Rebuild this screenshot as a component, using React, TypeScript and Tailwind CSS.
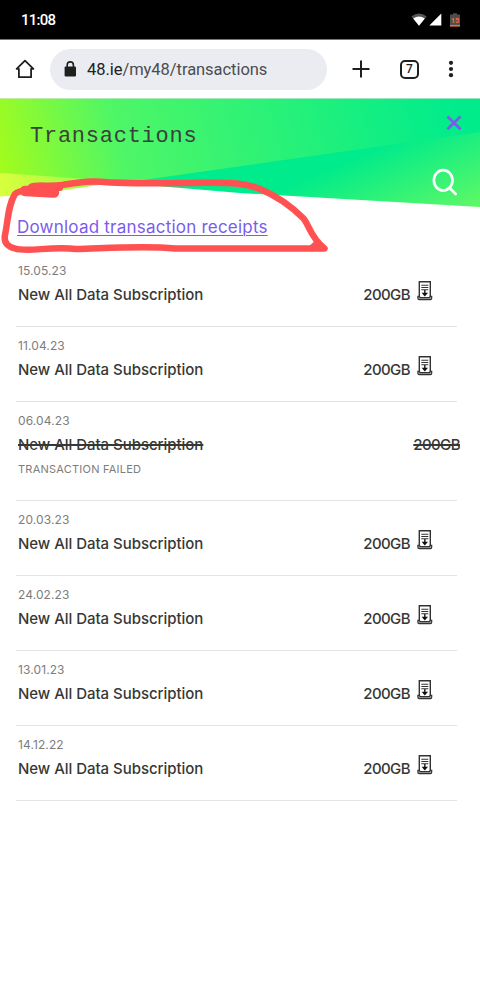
import clsx from "clsx";

type Transaction = {
  date: string;
  title: string;
  amount: string;
  failed?: boolean;
};

const TRANSACTIONS: Transaction[] = [
  { date: "15.05.23", title: "New All Data Subscription", amount: "200GB" },
  { date: "11.04.23", title: "New All Data Subscription", amount: "200GB" },
  { date: "06.04.23", title: "New All Data Subscription", amount: "200GB", failed: true },
  { date: "20.03.23", title: "New All Data Subscription", amount: "200GB" },
  { date: "24.02.23", title: "New All Data Subscription", amount: "200GB" },
  { date: "13.01.23", title: "New All Data Subscription", amount: "200GB" },
  { date: "14.12.22", title: "New All Data Subscription", amount: "200GB" },
];

function StatusBar() {
  return (
    <div className="flex h-[39px] items-center justify-between bg-black pr-[20px] pl-[21px] font-['Roboto',sans-serif] text-white">
      <span className="pt-px text-[15px] font-medium tracking-[-0.75px]">11:08</span>
      <div className="flex items-center">
        <svg width="16" height="14" viewBox="0 0 16 14" className="mr-[2px]">
          <path d="M0.3 3.4Q8-2.6 15.7 3.4L8 12.8Z" fill="#555" />
          <path d="M2.2 5.4Q8 1.6 13.8 5.4L8 12.8Z" fill="#fff" />
        </svg>
        <svg width="13" height="13" viewBox="0 0 13 13" className="mr-[8px]">
          <path d="M12.3 0.5V12.5H0.3Z" fill="#fff" />
        </svg>
        <svg width="10" height="14" viewBox="0 0 10 14">
          <path d="M3 0.3H7V1.6H10V13.5H0V1.6H3Z" fill="#4d4d4d" />
          <path d="M0 11.9H10V13.5H0Z" fill="#f4683c" />
          <text x="5" y="9.7" fontSize="7.5" fontWeight="700" textAnchor="middle" fill="#f4683c">
            15
          </text>
        </svg>
      </div>
    </div>
  );
}

function BrowserBar() {
  return (
    <div className="flex h-[59px] items-center border-t border-[#777] bg-white font-['Roboto',sans-serif] text-[#202124]">
      <svg width="20" height="20" viewBox="0 0 20 20" className="ml-[15px]" fill="none" stroke="#1f1f1f" strokeWidth="1.8">
        <path d="M3.9 9.8H1.6L10 1.6L18.4 9.8H16.1V18.2H3.9Z" strokeLinejoin="round" />
      </svg>
      <div className="ml-[15px] flex h-[41px] w-[277px] items-center rounded-full bg-[#ebecf1] pl-[14px]">
        <svg width="13" height="16" viewBox="0 0 13 16">
          <rect x="0.6" y="5.4" width="11.4" height="10" rx="1.2" fill="#1f1f1f" />
          <path d="M3.2 6V4A3.1 3.1 0 0 1 9.4 4V6" fill="none" stroke="#1f1f1f" strokeWidth="1.6" />
        </svg>
        <span className="ml-[10px] pt-[2px] text-[16.5px] tracking-[-0.05px] whitespace-nowrap">
          48.ie<span className="text-[#4b4c50]">/my48/transactions</span>
        </span>
      </div>
      <svg width="18" height="18" viewBox="0 0 18 18" className="ml-[25px]" stroke="#1f1f1f" strokeWidth="2">
        <path d="M9 0.5V17.5M0.5 9H17.5" />
      </svg>
      <div className="ml-[30px] flex h-[19px] w-[19px] items-center justify-center rounded-[5px] border-2 border-[#1f1f1f] text-[12px] font-medium">
        7
      </div>
      <svg width="6" height="18" viewBox="0 0 6 18" className="ml-[29px]" fill="#1f1f1f">
        <circle cx="3" cy="2.8" r="2.1" />
        <circle cx="3" cy="9" r="2.1" />
        <circle cx="3" cy="15.2" r="2.1" />
      </svg>
    </div>
  );
}

function Header() {
  return (
    <header className="relative h-[109px]">
      <svg width="480" height="109" viewBox="0 0 480 109" className="absolute inset-0">
        <defs>
          <linearGradient id="sky" gradientUnits="userSpaceOnUse" x1="0" y1="80" x2="445" y2="-30">
            <stop offset="0" stopColor="#a5fc1b" />
            <stop offset="0.27" stopColor="#4ff666" />
            <stop offset="0.55" stopColor="#30f275" />
            <stop offset="1" stopColor="#00ec8b" />
          </linearGradient>
          <linearGradient id="wedge" gradientUnits="userSpaceOnUse" x1="330" y1="70" x2="366" y2="154">
            <stop offset="0" stopColor="#00eb8b" />
            <stop offset="1" stopColor="#5cf866" />
          </linearGradient>
          <linearGradient id="lime" x1="0" y1="0" x2="1" y2="0">
            <stop offset="0" stopColor="#d8ff3d" />
            <stop offset="1" stopColor="#7cf850" />
          </linearGradient>
        </defs>
        <path d="M0 75L140 81L30 97L0 98.5Z" fill="url(#lime)" />
        <path d="M0 0H480V60L240 92L130 84L0 75Z" fill="url(#sky)" />
        <path d="M122 85L480 34V109L240 95Z" fill="url(#wedge)" />
        <path d="M0 0.5H480" stroke="#d9e3da" strokeOpacity="0.7" />
      </svg>
      <h1 className="relative pt-[25px] pl-[30px] font-['Liberation_Mono',monospace] text-[22px] leading-[27px] tracking-[0.75px] text-[#3b403b]">
        Transactions
      </h1>
      <svg width="16" height="16" viewBox="0 0 16 16" className="absolute top-[17px] left-[446px]">
        <path d="M1.5 1.5L14.5 14.2M14.5 1.5L1.5 14.2" stroke="#7a5cec" strokeWidth="2.8" />
      </svg>
      <svg width="28" height="28" viewBox="0 0 28 28" className="absolute top-[70px] left-[431px]" fill="none" stroke="#fff" strokeWidth="2.7">
        <ellipse cx="12.2" cy="12.3" rx="9.3" ry="10.2" />
        <path d="M18.7 20L24.7 26" strokeLinecap="round" />
      </svg>
    </header>
  );
}

function Scribble() {
  return (
    <svg width="340" height="80" viewBox="0 176 340 80" className="pointer-events-none absolute top-[176px] left-0" fill="none" stroke="#ff5151" strokeLinecap="round" strokeLinejoin="round">
      <path
        d="M31 187C36 184 48 187 62 185C77 182.5 86 181 100 181.8C135 184.5 175 183 205 182.8C232 182.6 244 182.6 260 189C279 197 295 210 303 218C309 224 310 237 324.5 248.5C275 248.6 220 248.4 175 248.4C145 245.5 110 248 76 249C50 245.5 29 253 15 248.5C8 246.5 3.5 243 5 235C8 221 8 205 15 194C20 188 42 191 54 192.5"
        strokeWidth="6.5"
      />
      <path d="M25 191L54 192.5" strokeWidth="10.5" />
      <path d="M33 187.5L60 188" strokeWidth="6" />
      <path d="M315 243L323 248.5L309 248.2Z" fill="#ff5151" strokeWidth="3" />
    </svg>
  );
}

function ReceiptIcon() {
  return (
    <svg width="16" height="20" viewBox="0 0 16 20" fill="none" stroke="#333">
      <path d="M2.3 15.5V0.8H13.3V15.5" strokeWidth="1.4" />
      <path d="M4.3 4.3H11.3M4.3 6.5H11.3M4.3 8.7H11.3" strokeWidth="1.1" />
      <path d="M7.8 9V13" strokeWidth="1.6" />
      <path d="M4.6 11.8H11L7.8 15.6Z" fill="#111" stroke="none" />
      <path d="M2.4 15.4H0.9V17.2Q0.9 18.6 2.2 18.6H13.4Q14.7 18.6 14.7 17.2V15.4H13.2L12.5 16.6H3.1Z" fill="#aaa" strokeWidth="1.2" />
    </svg>
  );
}

function TransactionRow({ date, title, amount, failed }: Transaction) {
  return (
    <li className={clsx("border-b border-[#e3e3e3] pt-[10px] pl-[2px]", failed ? "h-[99.4px]" : "h-[74.9px]")}>
      <p className="text-[12px] leading-[18px] tracking-[0.1px] text-[#7d7d7d]">{date}</p>
      <div className={clsx("flex h-[30px] items-center justify-between pt-px", failed ? "-mr-[3px]" : "pr-[24px]")}>
        <span className={clsx("text-[15px] font-medium tracking-[-0.04px] text-[#363836]", failed && "line-through decoration-2")}>
          {title}
        </span>
        <span className="flex items-center gap-[7px]">
          <span className={clsx("text-[15px] font-medium tracking-[-0.6px] text-[#363836]", failed && "line-through decoration-2")}>
            {amount}
          </span>
          {!failed && (
            <span className="-mt-[9px]">
              <ReceiptIcon />
            </span>
          )}
        </span>
      </div>
      {failed && (
        <p className="text-[11px] leading-[18px] tracking-[0.23px] text-[#7d7d7d]">TRANSACTION FAILED</p>
      )}
    </li>
  );
}

export default function App() {
  return (
    <div className="relative h-[999px] w-[480px] overflow-hidden bg-white font-['Inter',sans-serif]">
      <StatusBar />
      <BrowserBar />
      <Header />
      <main className="pr-[23px] pl-[16px]">
        <div className="h-[45px] pt-[8px] pl-[1px]">
          <a href="#" className="text-[17px] leading-[24px] tracking-[0.22px] whitespace-nowrap text-[#7a5cec] underline decoration-1 underline-offset-[2px]">
            Download transaction receipts
          </a>
        </div>
        <ul>
          {TRANSACTIONS.map((t) => (
            <TransactionRow key={t.date} {...t} />
          ))}
        </ul>
      </main>
      <Scribble />
    </div>
  );
}
